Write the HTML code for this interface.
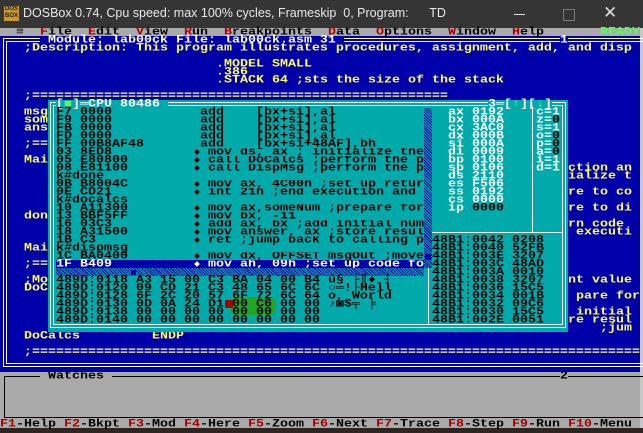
<!DOCTYPE html>
<html><head><meta charset="utf-8"><style>
*{margin:0;padding:0}
body{width:643px;height:433px;background:#1e1e1e;position:relative;overflow:hidden}
.a{position:absolute}
.l{position:absolute;white-space:pre;font:bold 13.33px/12px "Liberation Mono","DejaVu Sans Mono",monospace;transform:scaleY(.8);transform-origin:0 0;height:12px}
.c{overflow:hidden;width:216px}
.y{color:#ffff55}.w{color:#fff}.k{color:#000}.r{color:#aa0000}.g{color:#55ff55}
.sb{background:repeating-linear-gradient(45deg,#0000aa 0 1px,#00aaaa 1px 2px)}
</style></head><body>
<!-- title bar -->
<div class="a" style="left:0;top:0;width:643px;height:28px;background:#353535"></div>
<div class="a" style="left:4px;top:6px;width:15px;height:15px;background:#c89a2a;font:bold 6px/7px 'Liberation Sans',sans-serif;color:#222;text-align:center">DOS<br>BOX</div>
<div class="a" style="left:23px;top:6px;font:12.5px 'Liberation Sans',sans-serif;color:#e8e8e8;white-space:pre">DOSBox 0.74, Cpu speed: max 100% cycles, Frameskip  0, Program:      TD</div>
<div class="a" style="left:514px;top:14px;width:11px;height:1px;background:#ddd"></div>
<div class="a" style="left:563px;top:9px;width:10px;height:10px;border:1px solid #777"></div>
<div class="a" style="left:603px;top:3px;font:17px 'Liberation Sans',sans-serif;color:#ddd">✕</div>
<!-- screen backgrounds -->
<div class="a" style="left:0;top:28px;width:640px;height:8px;background:#aaa"></div>
<div class="a" style="left:0;top:36px;width:640px;height:336px;background:#0000aa"></div>
<div class="a" style="left:0;top:372px;width:640px;height:56px;background:#aaa"></div>
<div class="a" style="left:0;top:428px;width:643px;height:5px;background:#2b2622"></div>
<div class="a" style="left:640px;top:28px;width:3px;height:400px;background:#c8c8c8"></div>
<!-- menu -->
<div class="l k" style="top:28px;left:0">  ≡  <span class="r">F</span>ile  <span class="r">E</span>dit  <span class="r">V</span>iew  <span class="r">R</span>un  <span class="r">B</span>reakpoints  <span class="r">D</span>ata  <span class="r">O</span>ptions  <span class="r">W</span>indow  <span class="r">H</span>elp       <span class="g">READY</span></div>
<!-- module window borders -->
<div class="a" style="left:3px;top:38px;width:660px;height:327px;border:1px solid #fff"></div>
<div class="a" style="left:6px;top:41px;width:660px;height:321px;border:1px solid #fff"></div>
<div class="l w" style="top:36px;left:40px;background:#0000aa;height:10px"> Module: lab00ck File: lab00ck.asm 31 </div>
<div class="l w" style="top:36px;left:560px;background:#0000aa;height:10px">1</div>
<div class="l y" style="top:44px;left:24px;background:#0000aa;height:10px">;Description: This program illustrates procedures, assignment, add, and disp</div>
<div class="l y" style="top:60px;left:216px">.MODEL SMALL</div>
<div class="l y" style="top:68px;left:216px">.386</div>
<div class="l y" style="top:76px;left:216px">.STACK 64 ;sts the size of the stack</div>
<div class="l y" style="top:92px;left:24px">;====================================================</div>
<div class="l y" style="top:108px;left:24px">msg</div>
<div class="l y" style="top:116px;left:24px">som</div>
<div class="l y" style="top:124px;left:24px">ans</div>
<div class="l y" style="top:140px;left:24px">;==</div>
<div class="l y" style="top:156px;left:24px">Mai</div>
<div class="l y" style="top:212px;left:24px">don</div>
<div class="l y" style="top:244px;left:24px">Mai</div>
<div class="l y" style="top:260px;left:24px">;==</div>
<div class="l y" style="top:276px;left:24px">;Mo</div>
<div class="l y" style="top:284px;left:24px">DoC</div>
<div class="l y" style="top:332px;left:24px">DoCalcs         ENDP</div>
<div class="l y" style="top:348px;left:24px">;============================================================================</div>
<div class="l y" style="top:164px;left:568px">ction an</div>
<div class="l y" style="top:172px;left:568px">ialize t</div>
<div class="l y" style="top:188px;left:568px">re to co</div>
<div class="l y" style="top:204px;left:568px">re to di</div>
<div class="l y" style="top:220px;left:568px">rn code </div>
<div class="l y" style="top:228px;left:568px"> executi</div>
<div class="l y" style="top:276px;left:568px">nt value</div>
<div class="l y" style="top:292px;left:568px"> pare for</div>
<div class="l y" style="top:308px;left:568px"> initial</div>
<div class="l y" style="top:316px;left:568px">re resul</div>
<div class="l y" style="top:324px;left:568px">    ;jum</div>
<!-- CPU window -->
<div class="a" style="left:48px;top:100px;width:520px;height:232px;background:#00aaaa"></div>
<div class="a" style="left:50px;top:102px;width:514px;height:224px;border:1px solid #fff"></div>
<div class="a" style="left:53px;top:105px;width:508px;height:218px;border:1px solid #fff"></div>
<div class="l w" style="top:100px;left:56px;background:#00aaaa;height:10px">[<span class="g">■</span>]═CPU 80486 </div>
<div class="l w" style="top:100px;left:488px;background:#00aaaa;height:10px">3═[<span class="g">↑</span>][<span class="g">↓</span>]</div>
<!-- panes lines -->
<div class="a" style="left:532px;top:106px;width:1px;height:126px;background:#fff"></div>
<div class="a" style="left:428px;top:232px;width:134px;height:1px;background:#fff"></div>
<div class="a" style="left:428px;top:232px;width:1px;height:92px;background:#fff"></div>
<!-- selected code line -->
<div class="a" style="left:56px;top:260px;width:368px;height:8px;background:#0000aa"></div>
<!-- code -->
<div class="l k" style="top:108px;left:56px">F7 0000</div><div class="l k" style="top:108px;left:200px">add    [bx+si],al</div>
<div class="l k" style="top:116px;left:56px">F9 0000</div><div class="l k" style="top:116px;left:200px">add    [bx+si],al</div>
<div class="l k" style="top:124px;left:56px">FB 0000</div><div class="l k" style="top:124px;left:200px">add    [bx+si],al</div>
<div class="l k" style="top:132px;left:56px">FD 0000</div><div class="l k" style="top:132px;left:200px">add    [bx+si],al</div>
<div class="l k" style="top:140px;left:56px">FF 00B8AF48</div><div class="l k" style="top:140px;left:200px">add    [bx+si+48AF],bh</div>
<div class="l k" style="top:148px;left:56px">03 8ED8</div><div class="l k c" style="top:148px;left:208px">mov ds, ax ; initialize the</div>
<div class="l k" style="top:156px;left:56px">05 E80800</div><div class="l k c" style="top:156px;left:208px">call DoCalcs ;perform the p</div>
<div class="l k" style="top:164px;left:56px">08 E81100</div><div class="l k c" style="top:164px;left:208px">call DispMsg ;perform the p</div>
<div class="l k" style="top:172px;left:56px">k#done</div>
<div class="l k" style="top:180px;left:56px">0B B8004C</div><div class="l k c" style="top:180px;left:208px">mov ax, 4C00h ;set up retur</div>
<div class="l k" style="top:188px;left:56px">0E CD21</div><div class="l k c" style="top:188px;left:208px">int 21h ;end execution and</div>
<div class="l k" style="top:196px;left:56px">k#docalcs</div>
<div class="l k" style="top:204px;left:56px">10 A11300</div><div class="l k c" style="top:204px;left:208px">mov ax,someNum ;prepare for</div>
<div class="l k" style="top:212px;left:56px">13 BBF5FF</div><div class="l k c" style="top:212px;left:208px">mov bx, -11</div>
<div class="l k" style="top:220px;left:56px">16 03C3</div><div class="l k c" style="top:220px;left:208px">add ax, bx ;add initial num</div>
<div class="l k" style="top:228px;left:56px">18 A31500</div><div class="l k c" style="top:228px;left:208px">mov answer, ax ;store resul</div>
<div class="l k" style="top:236px;left:56px">1B C3</div><div class="l k c" style="top:236px;left:208px">ret ;jump back to calling p</div>
<div class="l k" style="top:244px;left:56px">k#dispmsg</div>
<div class="l k" style="top:252px;left:56px">1C BA0400</div><div class="l k c" style="top:252px;left:208px">mov dx, OFFSET msgOut ;move</div>
<div class="l w" style="top:260px;left:56px">1F B409</div><div class="l w c" style="top:260px;left:208px">mov ah, 09h ;set up code fo</div>
<!-- scrollbars -->
<div class="a sb" style="left:424px;top:108px;width:8px;height:160px"></div>
<div class="a sb" style="left:56px;top:268px;width:368px;height:8px"></div>
<div class="a" style="left:425px;top:254px;width:6px;height:6px;background:#0000aa"></div>
<div class="a" style="left:131px;top:270px;width:5px;height:5px;background:#0000aa"></div>
<!-- diamonds -->
<div class="a" style="left:195px;top:150px;width:4px;height:4px;background:#000;transform:rotate(45deg)"></div>
<div class="a" style="left:195px;top:158px;width:4px;height:4px;background:#000;transform:rotate(45deg)"></div>
<div class="a" style="left:195px;top:166px;width:4px;height:4px;background:#000;transform:rotate(45deg)"></div>
<div class="a" style="left:195px;top:182px;width:4px;height:4px;background:#000;transform:rotate(45deg)"></div>
<div class="a" style="left:195px;top:190px;width:4px;height:4px;background:#000;transform:rotate(45deg)"></div>
<div class="a" style="left:195px;top:206px;width:4px;height:4px;background:#000;transform:rotate(45deg)"></div>
<div class="a" style="left:195px;top:214px;width:4px;height:4px;background:#000;transform:rotate(45deg)"></div>
<div class="a" style="left:195px;top:222px;width:4px;height:4px;background:#000;transform:rotate(45deg)"></div>
<div class="a" style="left:195px;top:230px;width:4px;height:4px;background:#000;transform:rotate(45deg)"></div>
<div class="a" style="left:195px;top:238px;width:4px;height:4px;background:#000;transform:rotate(45deg)"></div>
<div class="a" style="left:195px;top:254px;width:4px;height:4px;background:#000;transform:rotate(45deg)"></div>
<div class="a" style="left:195px;top:262px;width:4px;height:4px;background:#fff;transform:rotate(45deg)"></div>
<!-- registers -->
<div class="l w" style="top:108px;left:448px">ax 0192</div>
<div class="l w" style="top:116px;left:448px">bx 000A</div>
<div class="l w" style="top:124px;left:448px">cx 3AC0</div>
<div class="l w" style="top:132px;left:448px">dx 000B</div>
<div class="l w" style="top:140px;left:448px">si 000A</div>
<div class="l w" style="top:148px;left:448px">di 0009</div>
<div class="l w" style="top:156px;left:448px">bp 0100</div>
<div class="l w" style="top:164px;left:448px">sp 0106</div>
<div class="l w" style="top:172px;left:448px">ds 2110</div>
<div class="l w" style="top:180px;left:448px">es F506</div>
<div class="l w" style="top:188px;left:448px">ss 0192</div>
<div class="l w" style="top:196px;left:448px">cs 0000</div>
<div class="l w" style="top:204px;left:448px">ip <span class="k">0000</span></div>
<div class="l w" style="top:108px;left:536px">c=1</div>
<div class="l w" style="top:116px;left:536px">z=<span class="k">0</span></div>
<div class="l w" style="top:124px;left:536px">s=1</div>
<div class="l w" style="top:132px;left:536px">o=<span class="k">0</span></div>
<div class="l w" style="top:140px;left:536px">p=<span class="k">0</span></div>
<div class="l w" style="top:148px;left:536px">a=<span class="k">0</span></div>
<div class="l w" style="top:156px;left:536px">i=1</div>
<div class="l w" style="top:164px;left:536px">d=1</div>
<!-- stack -->
<div class="l k" style="top:236px;left:432px">48B1:0042 0208</div>
<div class="l k" style="top:244px;left:432px">48B1:0040 52FB</div>
<div class="l k" style="top:252px;left:432px">48B1:003E 3207</div>
<div class="l k" style="top:260px;left:432px">48B1:003C 48AD</div>
<div class="l k" style="top:268px;left:432px">48B1:003A 0010</div>
<div class="l k" style="top:276px;left:432px">48B1:0038 3207</div>
<div class="l k" style="top:284px;left:432px">48B1:0036 15C5</div>
<div class="l k" style="top:292px;left:432px">48B1:0034 001B</div>
<div class="l k" style="top:300px;left:432px">48B1:0032 09C6</div>
<div class="l k" style="top:308px;left:432px">48B1:0030 15C5</div>
<div class="l k" style="top:316px;left:432px">48B1:002E 0051</div>
<!-- dump -->
<div class="a" style="left:230px;top:297px;width:46px;height:18px;background:#22a522;border-radius:7px"></div>
<div class="a" style="left:225px;top:300px;width:8px;height:8px;background:#aa0000"></div>
<div class="l k" style="top:276px;left:56px">489D:0118 A3 15 00 C3 BA 04 00 B4 ú§ ├║♦ ┤</div>
<div class="l k" style="top:284px;left:56px">489D:0120 09 CD 21 C3 48 65 6C 6C ○═!├Hell</div>
<div class="l k" style="top:292px;left:56px">489D:0128 6F 2C 20 57 6F 72 6C 64 o, World</div>
<div class="l k" style="top:300px;left:56px">489D:0130 0D 0A 24 D1 00 C6 00 00 ♪◙$╤ ╞</div>
<div class="l k" style="top:308px;left:56px">489D:0138 00 00 00 00 00 00 00 00</div>
<div class="l k" style="top:316px;left:56px">489D:0140 00 00 00 00 00 00 00 00</div>
<!-- watches -->
<div class="a" style="left:4px;top:376px;width:650px;height:40px;border:1px solid #000"></div>
<div class="l k" style="top:372px;left:40px;background:#aaa;height:10px"> Watches </div>
<div class="l k" style="top:372px;left:560px;background:#aaa;height:10px">2</div>
<!-- F keys -->
<div class="l k" style="top:420px;left:0"><span class="r">F1</span>-Help <span class="r">F2</span>-Bkpt <span class="r">F3</span>-Mod <span class="r">F4</span>-Here <span class="r">F5</span>-Zoom <span class="r">F6</span>-Next <span class="r">F7</span>-Trace <span class="r">F8</span>-Step <span class="r">F9</span>-Run <span class="r">F10</span>-Menu</div>
</body></html>
